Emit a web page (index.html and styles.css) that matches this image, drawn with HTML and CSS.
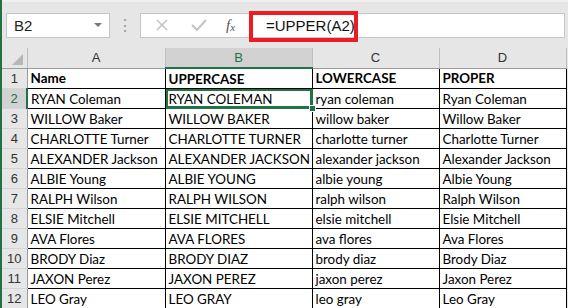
FILE: index.html
```html
<!DOCTYPE html>
<html lang="en">
  <head>
    <meta charset="UTF-8" />
    <title>UPPER LOWER PROPER</title>
    <link rel="stylesheet" href="styles.css">
  </head>
  <body>
    <div id="app">
      <!-- Formula bar -->
      <div id="formulaBar">
        <div class="name-box">
          <span>B2</span>
          <span class="caret"></span>
        </div>
        <div class="dots">&#8942;</div>
        <div class="buttons">
          <svg width="14" height="14" viewBox="0 0 14 14"><path d="M2 2 L12 12 M12 2 L2 12" stroke="#c4c4c4" stroke-width="1.6" fill="none"/></svg>
          <svg width="16" height="14" viewBox="0 0 16 14"><path d="M1 7 L6 12 L15 2" stroke="#c4c4c4" stroke-width="2" fill="none"/></svg>
          <span class="fx">f<span class="x">x</span></span>
        </div>
        <div class="formula">
          <span class="formula-text">=UPPER(A2)</span>
          <div class="highlight"></div>
        </div>
      </div>

      <!-- Sheet -->
      <table id="sheet">
        <colgroup>
          <col style="width:25px">
          <col style="width:138px">
          <col style="width:147px">
          <col style="width:127px">
          <col style="width:127px">
        </colgroup>
        <thead>
          <tr>
            <th class="corner"><span class="tri"></span></th>
            <th>A</th>
            <th class="active">B</th>
            <th>C</th>
            <th>D</th>
          </tr>
        </thead>
        <tbody id="rows"></tbody>
      </table>
    </div>

    <script>
      // names as typed in column A
      const names = [
        "RYAN Coleman", "WILLOW Baker", "CHARLOTTE Turner", "ALEXANDER Jackson",
        "ALBIE Young", "RALPH Wilson", "ELSIE Mitchell", "AVA Flores",
        "BRODY Diaz", "JAXON Perez", "LEO Gray"
      ];

      function proper(s) {
        return s.toLowerCase().replace(/\b\w/g, c => c.toUpperCase());
      }

      const body = document.getElementById("rows");
      let html = "<tr class='head-row'><th class='rowhead'>1</th>" +
        "<td>Name</td><td>UPPERCASE</td><td>LOWERCASE</td><td>PROPER</td></tr>";
      names.forEach((n, i) => {
        const r = i + 2;
        const sel = r === 2;
        html += "<tr><th class='rowhead" + (sel ? " active" : "") + "'>" + r + "</th>" +
          "<td>" + n + "</td>" +
          "<td" + (sel ? " class='selected'" : "") + ">" + n.toUpperCase() +
          (sel ? "<span class='handle'></span>" : "") + "</td>" +
          "<td>" + n.toLowerCase() + "</td>" +
          "<td>" + proper(n) + "</td></tr>";
      });
      body.innerHTML = html;
    </script>
  </body>
</html>
```
FILE: styles.css
```css
body {
  margin: 0;
  background-color: #ffffff;
  font-family: "Liberation Sans", Arial, sans-serif;
  overflow: hidden;
}
#app {
  width: 568px;
  height: 308px;
  border-left: 2px solid #217346;
  box-sizing: border-box;
  background-color: #e6e6e6;
  overflow: hidden;
}
/* Formula bar */
#formulaBar {
  display: flex;
  align-items: center;
  height: 48px;
  padding-left: 4px;
  border-top: 2px solid #f0f0f0;
  box-sizing: border-box;
}
.name-box {
  display: flex;
  align-items: center;
  justify-content: space-between;
  width: 104px;
  height: 25px;
  box-sizing: border-box;
  background: #fff;
  border: 1px solid #c6c6c6;
  padding: 0 7px 0 7px;
  font-size: 15px;
  color: #222;
}
.caret {
  width: 0;
  height: 0;
  border-left: 4px solid transparent;
  border-right: 4px solid transparent;
  border-top: 4px solid #777;
}
.dots {
  width: 30px;
  text-align: center;
  color: #9a9a9a;
  font-size: 16px;
}
.buttons {
  display: flex;
  align-items: center;
  gap: 22px;
  width: 108px;
  height: 25px;
  box-sizing: border-box;
  background: #fff;
  border: 1px solid #c6c6c6;
  border-right: none;
  padding-left: 14px;
}
.fx {
  font-family: "Liberation Serif", serif;
  font-style: italic;
  font-size: 15px;
  color: #555;
  margin-left: -3px;
}
.fx .x {
  font-size: 11px;
  position: relative;
  top: 1px;
}
.formula {
  position: relative;
  flex: 1;
  height: 25px;
  box-sizing: border-box;
  background: #fff;
  border: 1px solid #c6c6c6;
  border-left: none;
  margin-right: 3px;
  display: flex;
  align-items: center;
  padding-left: 18px;
  font-size: 15px;
  color: #111;
}
.highlight {
  position: absolute;
  left: 1px;
  top: -3px;
  width: 109px;
  height: 31px;
  box-sizing: border-box;
  border: 4px solid #ed1c24;
}
/* Sheet grid */
#sheet {
  border-collapse: collapse;
  table-layout: fixed;
  width: 564px;
  background: #fff;
  font-family: "Lato", "Liberation Sans", sans-serif;
  font-size: 13.4px;
}
#sheet thead th {
  height: 19px;
  padding: 0;
  background: #e6e6e6;
  font-weight: normal;
  font-family: "Liberation Sans", Arial, sans-serif;
  font-size: 13px;
  color: #333;
  border-right: 1px solid #bfbfbf;
  border-bottom: 1px solid #9b9b9b;
}
#sheet thead th.active {
  background: #d2d2d2;
  color: #217346;
  border-bottom: 2px solid #217346;
}
.corner {
  position: relative;
}
.tri {
  position: absolute;
  right: 4px;
  bottom: 3px;
  width: 0;
  height: 0;
  border-left: 11px solid transparent;
  border-bottom: 11px solid #b7b7b7;
}
#sheet td {
  height: 19px;
  padding: 0 0 0 3px;
  border: 1px solid #000;
  color: #000;
  white-space: nowrap;
  overflow: hidden;
}
.rowhead {
  padding: 0;
  background: #e6e6e6;
  font-weight: normal;
  font-family: "Liberation Sans", Arial, sans-serif;
  font-size: 13px;
  color: #333;
  border-bottom: 1px solid #d4d4d4;
  border-right: 1px solid #9b9b9b;
  text-align: center;
}
.rowhead.active {
  background: #d2d2d2;
  color: #217346;
  border-right: 2px solid #217346;
}
.head-row td {
  font-weight: bold;
}
#sheet td.selected {
  position: relative;
  overflow: visible;
  box-shadow: inset 0 0 0 2px #217346;
  border: 1px solid #217346;
}
.handle {
  position: absolute;
  right: -4px;
  bottom: -4px;
  width: 5px;
  height: 5px;
  background: #217346;
  border: 1px solid #fff;
}
```
